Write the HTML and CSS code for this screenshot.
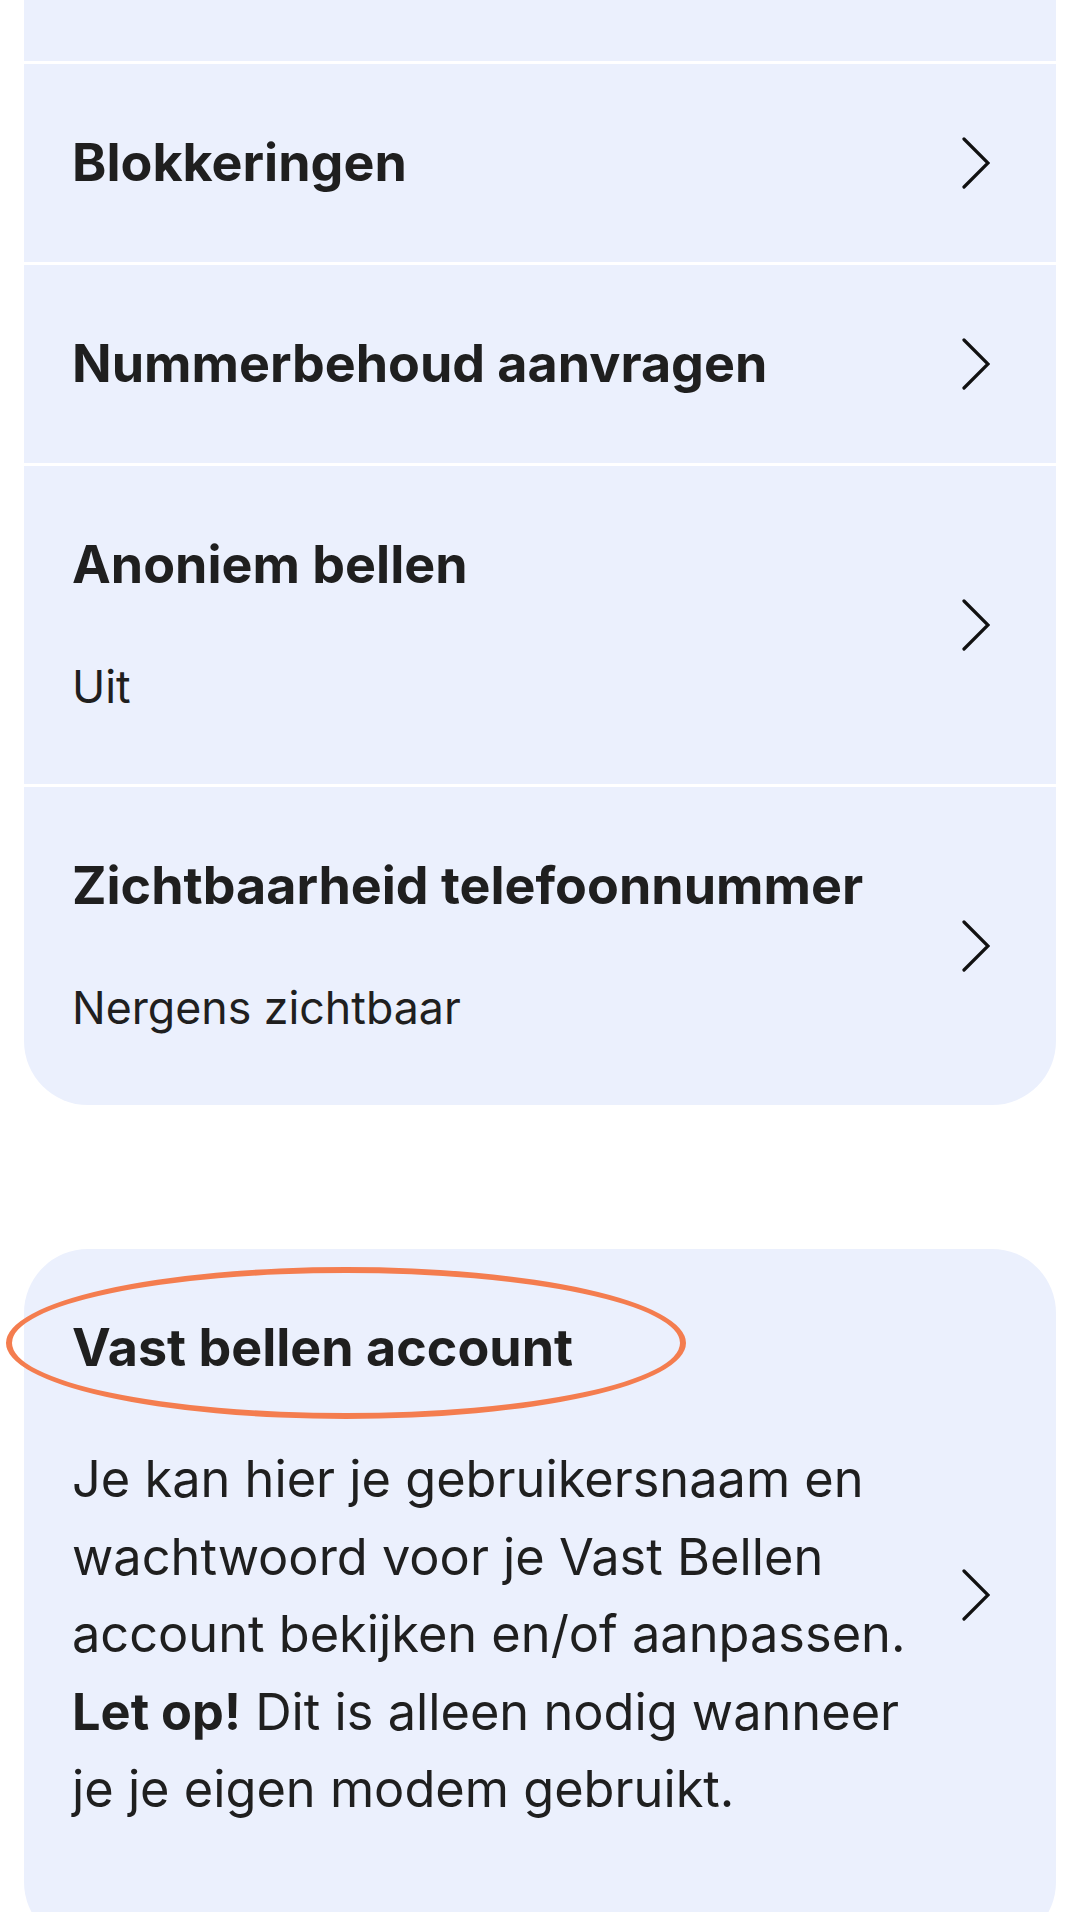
FILE: index.html
```html
<!DOCTYPE html>
<html lang="nl">
<head>
  <meta charset="UTF-8" />
  <meta name="viewport" content="width=device-width, initial-scale=1.0"/>
  <title>Vast bellen instellingen</title>
  <link rel="stylesheet" href="styles.css">
</head>
<body>

  <!-- Settings list (scrolled, top row cut off) -->
  <div class="card card-top">
    <div class="row row-cut"></div>

    <a class="row" href="#">
      <div class="row-text">
        <h3>Blokkeringen</h3>
      </div>
      <svg class="chevron" viewBox="0 0 28 52"><path d="M2 2 L26 26 L2 50"/></svg>
    </a>

    <a class="row" href="#">
      <div class="row-text">
        <h3>Nummerbehoud aanvragen</h3>
      </div>
      <svg class="chevron" viewBox="0 0 28 52"><path d="M2 2 L26 26 L2 50"/></svg>
    </a>

    <a class="row" href="#">
      <div class="row-text">
        <h3>Anoniem bellen</h3>
        <p class="sub">Uit</p>
      </div>
      <svg class="chevron" viewBox="0 0 28 52"><path d="M2 2 L26 26 L2 50"/></svg>
    </a>

    <a class="row" href="#">
      <div class="row-text">
        <h3>Zichtbaarheid telefoonnummer</h3>
        <p class="sub">Nergens zichtbaar</p>
      </div>
      <svg class="chevron" viewBox="0 0 28 52"><path d="M2 2 L26 26 L2 50"/></svg>
    </a>
  </div>

  <!-- Account card -->
  <div class="card card-account">
    <a class="row row-account" href="#">
      <div class="row-text">
        <h3>Vast bellen account</h3>
        <p class="desc">Je kan hier je gebruikersnaam en wachtwoord voor je Vast Bellen account bekijken en/of aanpassen. <strong>Let op!</strong> Dit is alleen nodig wanneer je je eigen modem gebruikt.</p>
      </div>
      <svg class="chevron" viewBox="0 0 28 52"><path d="M2 2 L26 26 L2 50"/></svg>
    </a>
    <!-- highlight drawn over the title -->
    <span class="marker"></span>
  </div>

</body>
</html>
```

FILE: styles.css
```css
* {
  box-sizing: border-box;
}

body {
  font-family: Inter, "Noto Sans", sans-serif;
  background: #fff;
  color: #1f1f1f;
  margin: 0;
  padding: 0;
}

.card {
  margin: 0 24px;
  display: flex;
  flex-direction: column;
  gap: 3px;
  border-radius: 64px;
  overflow: hidden;
}

.card-top {
  border-radius: 0 0 64px 64px;
}

.row {
  display: flex;
  align-items: center;
  gap: 20px;
  padding: 69px 66px 69px 48px;
  background: #ebf0fd;
  color: inherit;
  text-decoration: none;
}

.row-cut {
  height: 61px;
  padding: 0;
}

.row-text {
  flex: 1;
}

.row h3 {
  margin: 0;
  font-size: 52px;
  line-height: 60px;
  font-weight: 700;
}

.sub {
  margin: 64px 0 0;
  font-size: 44.7px;
  line-height: 56px;
}

.chevron {
  width: 28px;
  height: 52px;
  flex-shrink: 0;
}

.chevron path {
  fill: none;
  stroke: #111;
  stroke-width: 3.2;
  stroke-linecap: round;
  stroke-linejoin: miter;
}

/* account card */
.card-account {
  position: relative;
  margin-top: 144px;
  overflow: visible;
}

.row-account {
  border-radius: 64px;
  padding-bottom: 74px;
}

.desc {
  margin: 62px 0 44px;
  font-size: 50.5px;
  line-height: 77.5px;
}

.desc strong {
  font-weight: 700;
}

.marker {
  position: absolute;
  left: -18px;
  top: 18px;
  width: 680px;
  height: 152px;
  border: 6px solid #f47d4f;
  border-radius: 50%;
  pointer-events: none;
}
```
